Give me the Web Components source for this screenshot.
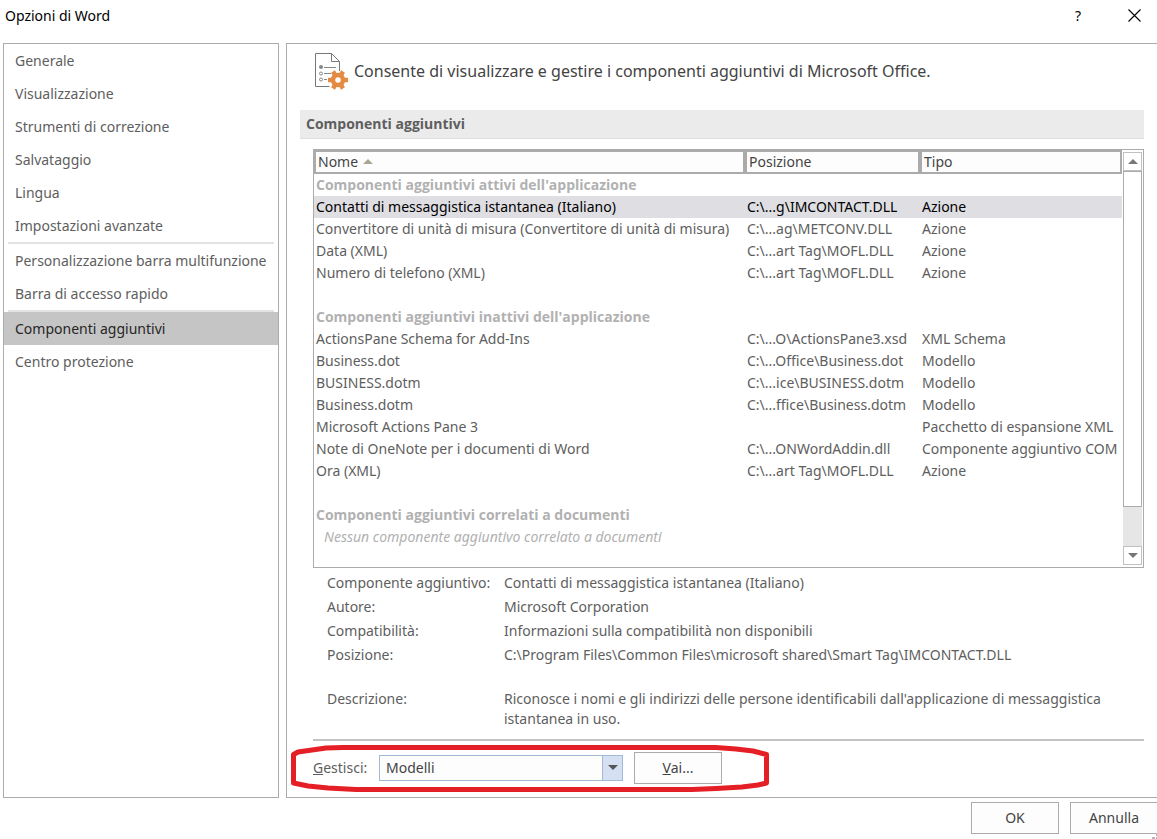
<!DOCTYPE html>
<html lang="it">
<head>
<meta charset="utf-8">
<title>Opzioni di Word</title>
<style>
  html, body { margin: 0; height: 100%; }
  body {
    background: #fff;
    color: #5e5e5e;
    font: 14px/22px "Noto Sans", "Open Sans", sans-serif;
    overflow: hidden;
    --line: #ababab;
    --strong: #444;
    --bold-font: "Open Sans", "Noto Sans", sans-serif;
  }
</style>
</head>
<body>
<options-dialog></options-dialog>

<template id="options-dialog">
  <style>
    :host { display: flex; flex-direction: column; min-height: 100vh; box-sizing: border-box; }
    main { flex: 1; display: flex; gap: 7px; padding-left: 3px; }
    options-nav { flex: 0 0 276px; }
    options-panel { flex: 1; min-width: 0; }
    footer { position: relative; display: flex; justify-content: flex-end; gap: 11px; padding: 4px 0 5px; margin-right: -1px; }
    .grip { position: absolute; right: 0; bottom: 0; }
  </style>
  <title-bar>Opzioni di Word</title-bar>
  <main>
    <options-nav>
      <nav-item>Generale</nav-item>
      <nav-item>Visualizzazione</nav-item>
      <nav-item>Strumenti di correzione</nav-item>
      <nav-item>Salvataggio</nav-item>
      <nav-item>Lingua</nav-item>
      <nav-item>Impostazioni avanzate</nav-item>
      <nav-item divided>Personalizzazione barra multifunzione</nav-item>
      <nav-item>Barra di accesso rapido</nav-item>
      <nav-item divided selected>Componenti aggiuntivi</nav-item>
      <nav-item>Centro protezione</nav-item>
    </options-nav>
    <options-panel>
      <span slot="intro">Consente di visualizzare e gestire i componenti aggiuntivi di Microsoft Office.</span>
      <span slot="heading">Componenti aggiuntivi</span>
      <addins-list></addins-list>
      <addin-details></addin-details>
      <manage-bar></manage-bar>
    </options-panel>
  </main>
  <footer>
    <dialog-button>OK</dialog-button>
    <dialog-button>Annulla</dialog-button>
    <svg class="grip" width="6" height="5" viewBox="0 0 6 5" fill="#b5b5b5" aria-hidden="true"><path d="M0 3h3v2H0zM4 3h2v2H4zM4 0h2v2H4z"/></svg>
  </footer>
</template>

<template id="title-bar">
  <style>
    :host { display: flex; align-items: flex-start; height: 43px; color: #000; }
    h1 { flex: 1; margin: 0; padding: 5px; font: inherit; }
    button { width: 57px; height: 31px; padding: 0; border: 0; background: none; color: inherit; font: inherit; display: grid; place-items: center; }
    .help { width: 68px; }
    .close { width: 45px; }
  </style>
  <h1><slot></slot></h1>
  <button class="help" type="button" aria-label="Guida">?</button>
  <button class="close" type="button" aria-label="Chiudi"><svg width="13" height="13" viewBox="0 0 13 13" stroke="#000" stroke-width="1.1" fill="none"><path d="M.5 .5l12 12M12.5 .5l-12 12"/></svg></button>
</template>

<template id="options-nav">
  <style>
    :host { display: block; box-sizing: border-box; border: 1px solid var(--line); }
  </style>
  <nav aria-label="Categorie"><slot></slot></nav>
</template>

<template id="nav-item">
  <style>
    :host { display: block; }
    :host([divided])::before { content: ""; display: block; height: 2px; margin: 0 4px; background: #e3e3e3; }
    a { display: block; padding: 0 11px; line-height: 33px; color: inherit; text-decoration: none; white-space: nowrap; }
    :host([selected]) a { background: #c5c5c5; color: #262626; }
  </style>
  <a href="#"><slot></slot></a>
</template>

<template id="options-panel">
  <style>
    :host { display: block; box-sizing: border-box; border: 1px solid var(--line); border-right: 0; padding: 8px 13px 0; }
    header { display: flex; align-items: center; gap: 5px; padding-left: 14px; height: 38px; color: var(--strong); font-size: 16px; white-space: nowrap; }
    h2 { margin: 20px 0 10px; padding: 0 6px; font: 700 14px/28px var(--bold-font); background: #ebebeb; border-bottom: 1px solid #dedede; }
    .body { display: block; padding-left: 13px; }
  </style>
  <header>
    <svg width="35" height="38" viewBox="0 0 35 38" fill="none" aria-hidden="true">
      <path d="M15.500 34.500H1.500V1.500H17.500L25.500 9.500V19M17.500 1.500V9.500H25.500" stroke="#777"/>
      <circle cx="7" cy="15" r="2" fill="#888"/>
      <g stroke="#888"><path d="M10 15.500H22M10 21.500H17M10 27.500H13"/><circle cx="7" cy="21.500" r="1.500"/><circle cx="7" cy="27.500" r="1.500"/></g>
      <path d="M14 28H34M19 19.500L29 36.500M29 19.500L19 36.500" stroke="#e38b43" stroke-width="4.500"/>
      <circle cx="24" cy="28" r="5" stroke="#e38b43" stroke-width="4.500" fill="#fff"/>
    </svg>
    <slot name="intro"></slot>
  </header>
  <h2><slot name="heading"></slot></h2>
  <div class="body"><slot></slot></div>
</template>

<template id="addins-list">
  <style>
    :host { display: flex; box-sizing: border-box; border: 1px solid var(--line); height: 419px; }
    .view { flex: 1; min-width: 0; overflow: hidden; }
    list-scrollbar { flex: 0 0 19px; margin: 2px 1px; }
    table { width: 100%; table-layout: fixed; border-collapse: separate; border-spacing: 0; }
    .place { width: 175px; }
    .kind { width: 202px; }
    th, td { box-sizing: border-box; height: 22px; padding: 0 0 0 2px; line-height: 22px; text-align: left; font-weight: 400; white-space: nowrap; }
    thead th { height: 24px; border: 2px solid var(--line); line-height: 20px; color: var(--strong); background: #fdfdfd; }
    thead svg { margin-left: 5px; vertical-align: 3px; }
    tbody th { font-family: var(--bold-font); font-weight: 700; color: #b1b1b1; }
    .selected { background: #dfdee3; color: #000; }
    .empty td { padding-left: 10px; font-style: italic; color: #b1b1b1; }
  </style>
  <div class="view">
    <table>
      <colgroup><col><col class="place"><col class="kind"></colgroup>
      <thead><tr>
        <th scope="col">Nome<svg width="10" height="5" viewBox="0 0 10 5" aria-hidden="true"><path d="M0 5L5 0L10 5Z" fill="#aaa696"/></svg></th>
        <th scope="col">Posizione</th>
        <th scope="col">Tipo</th>
      </tr></thead>
      <tbody></tbody>
    </table>
  </div>
  <list-scrollbar></list-scrollbar>
</template>

<template id="list-scrollbar">
  <style>
    :host { display: flex; flex-direction: column; background: #e6e6e6; }
    button { box-sizing: border-box; width: 100%; height: 19px; padding: 0; border: 1px solid #c0c0c0; background: #fff; display: grid; place-items: center; }
    .track { flex: 1; display: flex; flex-direction: column; }
    .thumb { flex: 336; border: 1px solid var(--line); background: #fff; }
    .rest { flex: 39; }
  </style>
  <button type="button" aria-label="Scorri su"><svg width="10" height="5" viewBox="0 0 10 5"><path d="M0 5L5 0L10 5Z" fill="#777"/></svg></button>
  <div class="track"><div class="thumb"></div><div class="rest"></div></div>
  <button type="button" aria-label="Scorri giù"><svg width="10" height="5" viewBox="0 0 10 5"><path d="M0 0L5 5L10 0Z" fill="#777"/></svg></button>
</template>

<template id="addin-details">
  <style>
    :host { display: block; padding: 3px 14px 0; }
    dl { display: grid; grid-template-columns: 177px 1fr; margin: 0; line-height: 24px; }
    dt { white-space: nowrap; }
    dd { margin: 0; }
    .about { margin-top: 22px; line-height: 20px; }
  </style>
  <dl>
    <dt>Componente aggiuntivo:</dt><dd>Contatti di messaggistica istantanea (Italiano)</dd>
    <dt>Autore:</dt><dd>Microsoft Corporation</dd>
    <dt>Compatibilità:</dt><dd>Informazioni sulla compatibilità non disponibili</dd>
    <dt>Posizione:</dt><dd>C:\Program Files\Common Files\microsoft shared\Smart Tag\IMCONTACT.DLL</dd>
    <dt class="about">Descrizione:</dt><dd class="about">Riconosce i nomi e gli indirizzi delle persone identificabili dall'applicazione di messaggistica istantanea in uso.</dd>
  </dl>
</template>

<template id="manage-bar">
  <style>
    :host { display: flex; align-items: center; position: relative; margin-top: 10px; padding: 11px 0 13px; border-top: 2px solid #c3c3c3; }
    label { flex: 0 0 66px; }
    .pick { position: relative; width: 244px; margin-right: 11px; }
    select { display: block; box-sizing: border-box; width: 100%; height: 26px; padding: 0 6px; border: 1px solid #a3b8d6; border-radius: 0; appearance: none; color: var(--strong); font: inherit; background: linear-gradient(#a3b8d6, #a3b8d6) right 19px top / 1px 100% no-repeat, linear-gradient(#d5e0f2, #d5e0f2) right / 19px 100% no-repeat #fdfdfd; }
    .arrow { position: absolute; right: 5px; top: 10px; pointer-events: none; }
    .marker { position: absolute; left: -23px; top: 2px; pointer-events: none; }
  </style>
  <label for="kind"><u>G</u>estisci:</label>
  <div class="pick">
    <select id="kind"><option>Modelli</option></select>
    <svg class="arrow" width="10" height="5" viewBox="0 0 10 5" aria-hidden="true"><path d="M0 0H10L5 5Z" fill="#555"/></svg>
  </div>
  <dialog-button><u>V</u>ai...</dialog-button>
  <svg class="marker" width="482" height="50" viewBox="0 0 482 50" fill="none" stroke="#e51f26" stroke-width="5" stroke-linejoin="round" aria-hidden="true">
    <path d="M53 4.500H426L446 6L463 8L476.500 11.500V40L468 42L452 44L426 45.500L402 46.500H66L38 45L18 43L3.500 40V11.500L8 9L22 7L36 5Z"/>
  </svg>
</template>

<template id="dialog-button">
  <style>
    :host { display: block; width: 88px; }
    button { box-sizing: border-box; width: 100%; height: 32px; padding: 0; border: 1px solid var(--line); border-radius: 0; background: #fdfdfd; color: var(--strong); font: inherit; }
  </style>
  <button type="button"><slot></slot></button>
</template>

<script>
  class TemplateElement extends HTMLElement {
    constructor() {
      super();
      const template = document.getElementById(this.localName);
      this.attachShadow({ mode: "open" }).append(template.content.cloneNode(true));
    }
  }

  const GROUPS = [
    { title: "Componenti aggiuntivi attivi dell'applicazione", rows: [
      ["Contatti di messaggistica istantanea (Italiano)", "C:\\...g\\IMCONTACT.DLL", "Azione"],
      ["Convertitore di unità di misura (Convertitore di unità di misura)", "C:\\...ag\\METCONV.DLL", "Azione"],
      ["Data (XML)", "C:\\...art Tag\\MOFL.DLL", "Azione"],
      ["Numero di telefono (XML)", "C:\\...art Tag\\MOFL.DLL", "Azione"] ] },
    { title: "Componenti aggiuntivi inattivi dell'applicazione", rows: [
      ["ActionsPane Schema for Add-Ins", "C:\\...O\\ActionsPane3.xsd", "XML Schema"],
      ["Business.dot", "C:\\...Office\\Business.dot", "Modello"],
      ["BUSINESS.dotm", "C:\\...ice\\BUSINESS.dotm", "Modello"],
      ["Business.dotm", "C:\\...ffice\\Business.dotm", "Modello"],
      ["Microsoft Actions Pane 3", "", "Pacchetto di espansione XML"],
      ["Note di OneNote per i documenti di Word", "C:\\...ONWordAddin.dll", "Componente aggiuntivo COM"],
      ["Ora (XML)", "C:\\...art Tag\\MOFL.DLL", "Azione"] ] },
    { title: "Componenti aggiuntivi correlati a documenti", rows: [],
      empty: "Nessun componente aggiuntivo correlato a documenti" }
  ];

  class AddinsList extends TemplateElement {
    connectedCallback() {
      const body = this.shadowRoot.querySelector("tbody");
      body.replaceChildren();
      const addRow = (tag, text, className) => {
        const row = body.insertRow();
        if (className) row.className = className;
        const cell = document.createElement(tag);
        cell.colSpan = 3;
        cell.textContent = text;
        row.append(cell);
      };
      GROUPS.forEach((group, g) => {
        if (g > 0) addRow("td", "");
        addRow("th", group.title);
        group.rows.forEach((values, r) => {
          const row = body.insertRow();
          if (g === 0 && r === 0) row.className = "selected";
          for (const value of values) row.insertCell().textContent = value;
        });
        if (group.empty) addRow("td", group.empty, "empty");
      });
    }
  }

  customElements.define("addins-list", AddinsList);
  for (const name of ["title-bar", "options-nav", "nav-item", "options-panel", "list-scrollbar",
                      "addin-details", "manage-bar", "dialog-button", "options-dialog"]) {
    customElements.define(name, class extends TemplateElement {});
  }
</script>
</body>
</html>
